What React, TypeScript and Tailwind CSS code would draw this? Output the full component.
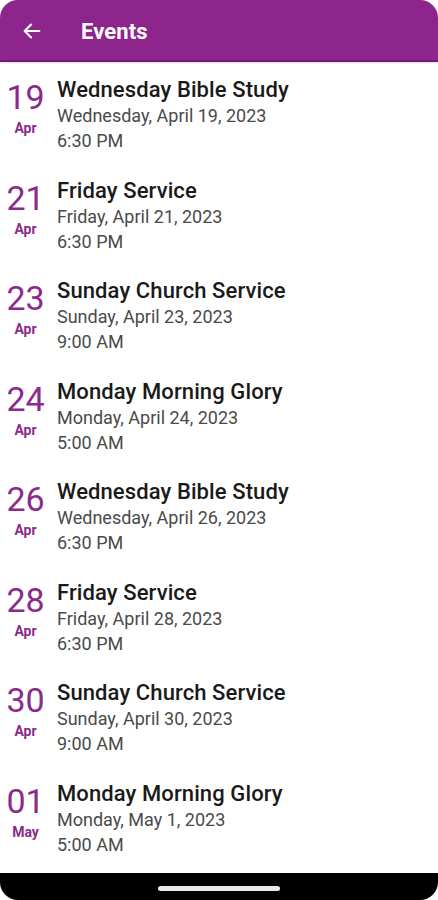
import React from "react";

const events = [
  { d: "19", m: "Apr", t: "Wednesday Bible Study", date: "Wednesday, April 19, 2023", time: "6:30 PM" },
  { d: "21", m: "Apr", t: "Friday Service", date: "Friday, April 21, 2023", time: "6:30 PM" },
  { d: "23", m: "Apr", t: "Sunday Church Service", date: "Sunday, April 23, 2023", time: "9:00 AM" },
  { d: "24", m: "Apr", t: "Monday Morning Glory", date: "Monday, April 24, 2023", time: "5:00 AM" },
  { d: "26", m: "Apr", t: "Wednesday Bible Study", date: "Wednesday, April 26, 2023", time: "6:30 PM" },
  { d: "28", m: "Apr", t: "Friday Service", date: "Friday, April 28, 2023", time: "6:30 PM" },
  { d: "30", m: "Apr", t: "Sunday Church Service", date: "Sunday, April 30, 2023", time: "9:00 AM" },
  { d: "01", m: "May", t: "Monday Morning Glory", date: "Monday, May 1, 2023", time: "5:00 AM" },
];

export default function App() {
  return (
    <div className="w-[438px] h-[900px] bg-white flex flex-col overflow-hidden" style={{ fontFamily: "Roboto, 'Noto Sans', sans-serif" }}>
      <div className="h-[62px] shrink-0 bg-[#8d258d] rounded-t-[18px] border-b-[2px] border-[#741a74] flex items-center shadow-[0_1px_2px_rgba(0,0,0,0.15)]">
        <svg width="22" height="22" viewBox="0 0 24 24" className="ml-[21px] mt-[2px]" fill="none" stroke="white" strokeWidth="2.4" strokeLinecap="round" strokeLinejoin="round">
          <path d="M20 12H5" />
          <path d="M11 5l-7 7 7 7" />
        </svg>
        <div className="ml-[38px] mt-[2px] text-white text-[22px] font-bold tracking-[0.1px]">Events</div>
      </div>
      <div className="h-[811px] shrink-0 flex flex-col pt-[2px]">
        {events.map((e, i) => (
          <div key={i} className="h-[100.5px] shrink-0 flex pt-[13px]">
            <div className="w-[51px] flex flex-col items-center">
              <div className="text-[34px] leading-[34px] text-[#8a2a8a] font-normal mt-[3px]">{e.d}</div>
              <div className="text-[14px] leading-[18px] font-bold text-[#8a2a8a] mt-[5px]">{e.m}</div>
            </div>
            <div className="ml-[6px] flex flex-col">
              <div className="text-[22px] leading-[26px] font-medium text-[#1a1a1a] tracking-[0.1px]">{e.t}</div>
              <div className="text-[18px] leading-[26px] text-[#4a4a4a]">{e.date}</div>
              <div className="text-[18px] leading-[24px] text-[#4a4a4a]">{e.time}</div>
            </div>
          </div>
        ))}
      </div>
      <div className="h-[27px] shrink-0 bg-black rounded-b-[18px] flex items-center justify-center">
        <div className="w-[122px] h-[5px] rounded-full bg-[#e8e8e8] mt-[3px]" />
      </div>
    </div>
  );
}
